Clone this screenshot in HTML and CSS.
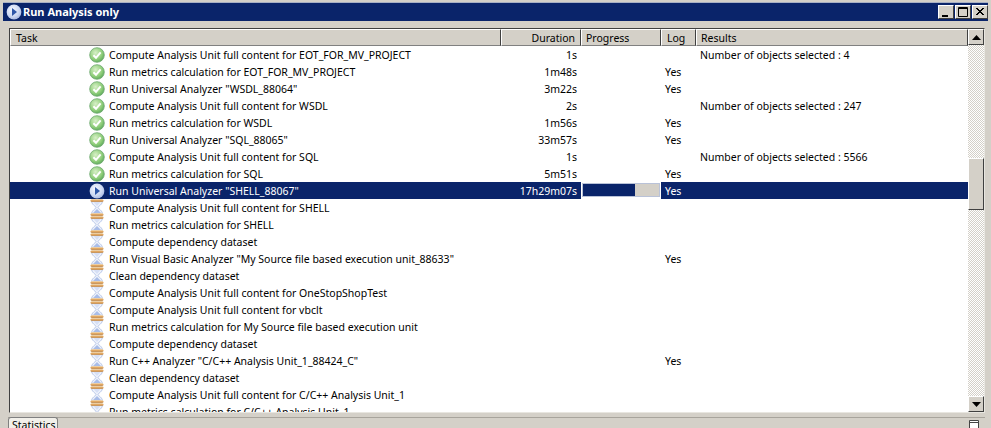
FILE: index.html
```html
<!DOCTYPE html>
<html lang="en">
<head>
<meta charset="utf-8">
<title>Run Analysis only</title>
<link rel="stylesheet" href="styles.css">
</head>
<body>
<svg class="defs" width="0" height="0" aria-hidden="true">
  <defs>
    <radialGradient id="gr" cx="0.4" cy="0.35" r="0.75"><stop offset="0" stop-color="#d8f0c8"/><stop offset="0.6" stop-color="#8fce7a"/><stop offset="1" stop-color="#4f9e52"/></radialGradient>
    <radialGradient id="bl" cx="0.4" cy="0.35" r="0.75"><stop offset="0" stop-color="#f4f7ff"/><stop offset="0.6" stop-color="#cdd8f2"/><stop offset="1" stop-color="#9fb0dc"/></radialGradient>
    <linearGradient id="cap" x1="0" y1="0" x2="0" y2="1"><stop offset="0" stop-color="#f0e0c4"/><stop offset="0.5" stop-color="#e2a862"/><stop offset="1" stop-color="#bd9060"/></linearGradient>
    <symbol id="ok" viewBox="0 0 16 16">
      <circle cx="8" cy="8" r="7.3" fill="url(#gr)" stroke="#6fa871" stroke-width="0.8"/>
      <path d="M4.4 8.2 7 10.8 11.6 5.4" fill="none" stroke="#fff" stroke-width="2"/>
    </symbol>
    <symbol id="run" viewBox="0 0 16 16">
      <circle cx="8" cy="8" r="7.4" fill="url(#bl)"/>
      <path d="M6 4 11 8 6 12Z" fill="#2f57a8"/>
    </symbol>
    <symbol id="wait" viewBox="0 0 16 17">
      <path d="M2.5 1.5H13.5C13.5 6 9 7 9 8.5S13.5 11 13.5 15.5H2.5C2.5 11 7 10 7 8.5S2.5 6 2.5 1.5Z" fill="#eef2fb" stroke="#b4c4e8"/>
      <path d="M3.5 14.5H12.5L8 10Z" fill="#a9bde8"/>
      <path d="M4.5 3H11.5L8 7Z" fill="#d6dff5"/>
      <rect x="1.5" y="0" width="13" height="3" rx="1.5" fill="url(#cap)"/>
      <rect x="1.5" y="14" width="13" height="3" rx="1.5" fill="url(#cap)"/>
    </symbol>
  </defs>
</svg>

<header class="titlebar">
  <svg class="title-icon" width="16" height="16"><use href="#run"/></svg>
  <span class="title-text">Run Analysis only</span>
  <span class="winbtns">
    <span class="winbtn"><svg width="16" height="14"><rect x="4" y="10" width="6" height="2" fill="#000"/></svg></span>
    <span class="winbtn"><svg width="16" height="14"><path d="M3.5 2.5H12.5V11.5H3.5ZM3 3.5H13" fill="none" stroke="#000"/></svg></span>
    <span class="winbtn"><svg width="16" height="14"><path d="M4 3 11 10M5 3 12 10M11 3 4 10M12 3 5 10" stroke="#000" fill="none"/></svg></span>
  </span>
</header>

<main class="panel">
  <div class="list">
    <div class="content">
      <div class="row head">
        <div class="hc c-task">Task</div>
        <div class="hc c-dur">Duration</div>
        <div class="hc c-prog">Progress</div>
        <div class="hc c-log">Log</div>
        <div class="hc c-res">Results</div>
      </div>
      <div class="rows">
        <div class="row"><div class="c-task"><svg class="ic" width="16" height="16"><use href="#ok"/></svg>Compute Analysis Unit full content for EOT_FOR_MV_PROJECT</div><div class="c-dur">1s</div><div class="c-prog"></div><div class="c-log"></div><div class="c-res">Number of objects selected : 4</div></div>
        <div class="row"><div class="c-task"><svg class="ic" width="16" height="16"><use href="#ok"/></svg>Run metrics calculation for EOT_FOR_MV_PROJECT</div><div class="c-dur">1m48s</div><div class="c-prog"></div><div class="c-log">Yes</div><div class="c-res"></div></div>
        <div class="row"><div class="c-task"><svg class="ic" width="16" height="16"><use href="#ok"/></svg>Run Universal Analyzer "WSDL_88064"</div><div class="c-dur">3m22s</div><div class="c-prog"></div><div class="c-log">Yes</div><div class="c-res"></div></div>
        <div class="row"><div class="c-task"><svg class="ic" width="16" height="16"><use href="#ok"/></svg>Compute Analysis Unit full content for WSDL</div><div class="c-dur">2s</div><div class="c-prog"></div><div class="c-log"></div><div class="c-res">Number of objects selected : 247</div></div>
        <div class="row"><div class="c-task"><svg class="ic" width="16" height="16"><use href="#ok"/></svg>Run metrics calculation for WSDL</div><div class="c-dur">1m56s</div><div class="c-prog"></div><div class="c-log">Yes</div><div class="c-res"></div></div>
        <div class="row"><div class="c-task"><svg class="ic" width="16" height="16"><use href="#ok"/></svg>Run Universal Analyzer "SQL_88065"</div><div class="c-dur">33m57s</div><div class="c-prog"></div><div class="c-log">Yes</div><div class="c-res"></div></div>
        <div class="row"><div class="c-task"><svg class="ic" width="16" height="16"><use href="#ok"/></svg>Compute Analysis Unit full content for SQL</div><div class="c-dur">1s</div><div class="c-prog"></div><div class="c-log"></div><div class="c-res">Number of objects selected : 5566</div></div>
        <div class="row"><div class="c-task"><svg class="ic" width="16" height="16"><use href="#ok"/></svg>Run metrics calculation for SQL</div><div class="c-dur">5m51s</div><div class="c-prog"></div><div class="c-log">Yes</div><div class="c-res"></div></div>
        <div class="row selected"><div class="c-task"><svg class="ic" width="16" height="16"><use href="#run"/></svg>Run Universal Analyzer "SHELL_88067"</div><div class="c-dur">17h29m07s</div><div class="c-prog"><div class="bar"><div class="fill" style="width:69%"></div></div></div><div class="c-log">Yes</div><div class="c-res"></div></div>
        <div class="row"><div class="c-task"><svg class="ic" width="16" height="17"><use href="#wait"/></svg>Compute Analysis Unit full content for SHELL</div><div class="c-dur"></div><div class="c-prog"></div><div class="c-log"></div><div class="c-res"></div></div>
        <div class="row"><div class="c-task"><svg class="ic" width="16" height="17"><use href="#wait"/></svg>Run metrics calculation for SHELL</div><div class="c-dur"></div><div class="c-prog"></div><div class="c-log"></div><div class="c-res"></div></div>
        <div class="row"><div class="c-task"><svg class="ic" width="16" height="17"><use href="#wait"/></svg>Compute dependency dataset</div><div class="c-dur"></div><div class="c-prog"></div><div class="c-log"></div><div class="c-res"></div></div>
        <div class="row"><div class="c-task"><svg class="ic" width="16" height="17"><use href="#wait"/></svg>Run Visual Basic Analyzer "My Source file based execution unit_88633"</div><div class="c-dur"></div><div class="c-prog"></div><div class="c-log">Yes</div><div class="c-res"></div></div>
        <div class="row"><div class="c-task"><svg class="ic" width="16" height="17"><use href="#wait"/></svg>Clean dependency dataset</div><div class="c-dur"></div><div class="c-prog"></div><div class="c-log"></div><div class="c-res"></div></div>
        <div class="row"><div class="c-task"><svg class="ic" width="16" height="17"><use href="#wait"/></svg>Compute Analysis Unit full content for OneStopShopTest</div><div class="c-dur"></div><div class="c-prog"></div><div class="c-log"></div><div class="c-res"></div></div>
        <div class="row"><div class="c-task"><svg class="ic" width="16" height="17"><use href="#wait"/></svg>Compute Analysis Unit full content for vbclt</div><div class="c-dur"></div><div class="c-prog"></div><div class="c-log"></div><div class="c-res"></div></div>
        <div class="row"><div class="c-task"><svg class="ic" width="16" height="17"><use href="#wait"/></svg>Run metrics calculation for My Source file based execution unit</div><div class="c-dur"></div><div class="c-prog"></div><div class="c-log"></div><div class="c-res"></div></div>
        <div class="row"><div class="c-task"><svg class="ic" width="16" height="17"><use href="#wait"/></svg>Compute dependency dataset</div><div class="c-dur"></div><div class="c-prog"></div><div class="c-log"></div><div class="c-res"></div></div>
        <div class="row"><div class="c-task"><svg class="ic" width="16" height="17"><use href="#wait"/></svg>Run C++ Analyzer "C/C++ Analysis Unit_1_88424_C"</div><div class="c-dur"></div><div class="c-prog"></div><div class="c-log">Yes</div><div class="c-res"></div></div>
        <div class="row"><div class="c-task"><svg class="ic" width="16" height="17"><use href="#wait"/></svg>Clean dependency dataset</div><div class="c-dur"></div><div class="c-prog"></div><div class="c-log"></div><div class="c-res"></div></div>
        <div class="row"><div class="c-task"><svg class="ic" width="16" height="17"><use href="#wait"/></svg>Compute Analysis Unit full content for C/C++ Analysis Unit_1</div><div class="c-dur"></div><div class="c-prog"></div><div class="c-log"></div><div class="c-res"></div></div>
        <div class="row"><div class="c-task"><svg class="ic" width="16" height="17"><use href="#wait"/></svg>Run metrics calculation for C/C++ Analysis Unit_1</div><div class="c-dur"></div><div class="c-prog"></div><div class="c-log"></div><div class="c-res"></div></div>
      </div>
    </div>
    <div class="scrollbar">
      <div class="sbtn"><svg width="9" height="5"><path d="M4.5 0 9 5H0Z" fill="#000"/></svg></div>
      <div class="track t1"></div>
      <div class="thumb"></div>
      <div class="track t2"></div>
      <div class="sbtn"><svg width="9" height="5"><path d="M0 0H9L4.5 5Z" fill="#000"/></svg></div>
    </div>
  </div>
</main>

<footer class="tabbar">
  <div class="tab">Statistics</div>
  <svg class="tab-icon" width="11" height="11"><path d="M0.5 0.5H9.5V10.5H0.5ZM0.5 2.5H9.5" fill="#fff" stroke="#444"/></svg>
</footer>
</body>
</html>
```
FILE: styles.css
```css
* { box-sizing: border-box; }
html, body { margin: 0; padding: 0; }
body {
  width: 991px;
  height: 428px;
  overflow: hidden;
  background: #d4d0c8;
  font-family: "Noto Sans", "Open Sans", sans-serif;
  font-size: 10.5px;
  color: #000;
  padding-top: 2px;
}
.defs { display: block; height: 0; }
.titlebar {
  margin: 0 3px;
  height: 19px;
  background: #0a246a;
  border-top: 1px solid #a8b0c4;
  color: #fff;
  display: flex;
  align-items: center;
  padding: 0 0 0 3px;
}
.title-icon { flex: none; }
.title-text { margin-left: 1px; padding-bottom: 1px; font-weight: 700; font-size: 11px; }
.winbtns { margin-left: auto; display: flex; gap: 1px; }
.winbtn {
  width: 16px; height: 14px;
  background: #d4d0c8;
  display: block;
  border: 1px solid;
  border-color: #fff #404040 #404040 #fff;
  overflow: hidden;
}
.winbtn svg { display: block; margin: -1px 0 0 -1px; }
.panel { padding: 7px 6px 0 9px; }
.list {
  display: flex;
  width: 976px;
  height: 385px;
  background: #fff;
  border: 1px solid;
  border-color: #404040 #e8e6e0 #e8e6e0 #404040;
}
.content { width: 958px; flex: none; overflow: hidden; }
.rows { height: 366px; overflow: hidden; }
.row {
  display: grid;
  grid-template-columns: 491px 80px 80px 35px 272px;
  grid-template-rows: 17px;
  height: 17px;
  line-height: 19px;
  white-space: nowrap;
}
.head { height: 17px; background: #d4d0c8; }
.hc {
  border: 1px solid;
  border-color: #fff #404040 #808080 #fff;
  line-height: 16px;
  padding-left: 4px;
  overflow: hidden;
}
.c-task { padding-left: 79px; display: flex; align-items: flex-start; overflow: visible; }
.head .c-task { padding-left: 5px; }
.ic { margin-right: 4px; flex: none; align-self: center; }
.c-dur { text-align: right; padding-right: 4px; }
.head .c-dur { padding-right: 5px; padding-left: 0; }
.c-log { padding-left: 4px; }
.head .c-log { padding-left: 5px; }
.c-res { padding-left: 4px; }
.selected { background: #0a246a; color: #fff; }
.selected .c-prog { background: #fff; padding: 1px; }
.bar { height: 14px; background: #d4d0c8; border: 1px solid #b9c2d8; }
.fill { height: 100%; background: #0a246a; }
.scrollbar { flex: none; width: 16px; display: flex; flex-direction: column; }
.sbtn {
  height: 16px;
  background: #d4d0c8;
  border: 1px solid;
  border-color: #fff #404040 #404040 #fff;
  display: flex;
  align-items: center;
  justify-content: center;
  flex: none;
}
.track {
  background-color: #fff;
  background-image: conic-gradient(#d4d0c8 25%, #fff 0 50%, #d4d0c8 0 75%, #fff 0);
  background-size: 2px 2px;
}
.t1 { height: 113px; flex: none; }
.thumb {
  height: 52px;
  flex: none;
  background: #d4d0c8;
  border: 1px solid;
  border-color: #fff #404040 #404040 #fff;
}
.t2 { flex: 1; }
.tabbar {
  margin: 4px 6px 0 8px;
  height: 16px;
  border-top: 1px solid #a8a49c;
  position: relative;
}
.tab {
  position: absolute;
  left: 0; top: -1px;
  width: 50px; height: 14px;
  background: #f2f0ea;
  border: 1px solid #808080;
  border-bottom: 0;
  border-radius: 3px 3px 0 0;
  padding-left: 3px;
  line-height: 14px;
}
.tab-icon { position: absolute; right: 5px; top: 2px; }
```
